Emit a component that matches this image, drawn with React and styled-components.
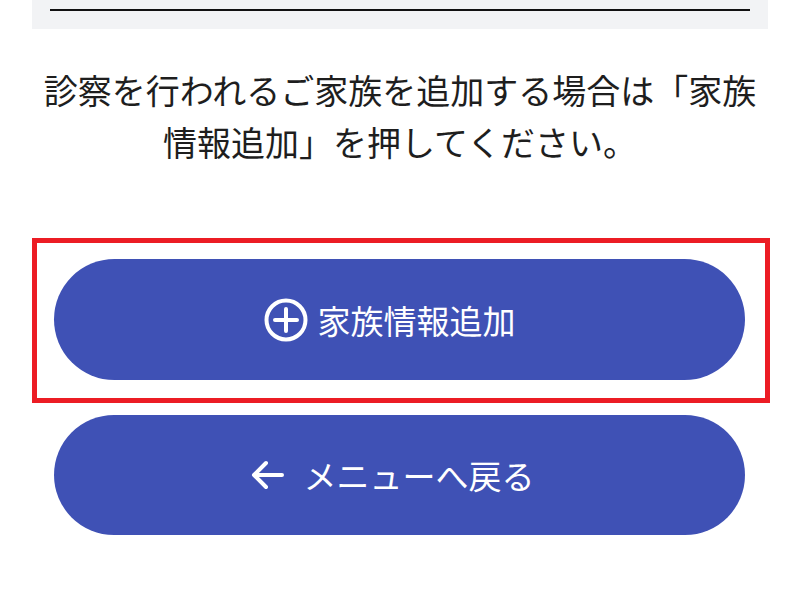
import React from "react";
import styled, { createGlobalStyle } from "styled-components";

const Global = createGlobalStyle`
  html, body { margin: 0; padding: 0; background: #ffffff; }
  body { font-family: "Noto Sans CJK JP", "Noto Sans", sans-serif; }
`;

const Page = styled.div`
  width: 800px;
  height: 589px;
  overflow: hidden;
  display: flex;
  flex-direction: column;
  align-items: flex-start;
`;

const TopPanel = styled.div`
  margin-left: 32px;
  width: 736px;
  height: 29px;
  background: #f2f3f5;
  box-sizing: border-box;
  padding: 9px 18px 0 18px;
`;

const Rule = styled.div`
  height: 2px;
  background: #111111;
`;

const Message = styled.p`
  margin: 35px 0 0 32px;
  width: 736px;
  text-align: center;
  font-size: 34px;
  line-height: 52px;
  color: #1e1e1e;
  font-weight: 400;
`;

const Highlight = styled.div`
  margin: 70px 0 0 32px;
  width: 738px;
  box-sizing: border-box;
  border: 5px solid #ec1c24;
  padding: 16px 20px 18px 17px;
`;

const PillButton = styled.button`
  display: flex;
  align-items: center;
  justify-content: center;
  gap: ${(p) => p.$gap}px;
  width: 691px;
  height: ${(p) => p.$h}px;
  border: none;
  border-radius: 61px;
  background: #3f51b5;
  color: #ffffff;
  font-family: "Noto Sans CJK JP", "Noto Sans", sans-serif;
  font-size: 33px;
  font-weight: 400;
  padding: 0 ${(p) => p.$offset}px 0 0;
  cursor: pointer;
`;

const BackButton = styled(PillButton)`
  margin: 12px 0 0 54px;
`;

const Icon = styled.svg`
  flex: none;
  display: block;
`;

const PlusCircle = () => (
  <Icon width="44" height="44" viewBox="0 0 44 44">
    <circle cx="22" cy="22" r="19.5" fill="none" stroke="#fff" strokeWidth="4" />
    <path d="M22 11 V33 M11 22 H33" stroke="#fff" strokeWidth="4" strokeLinecap="round" />
  </Icon>
);

const ArrowLeft = () => (
  <Icon width="35" height="30" viewBox="0 0 35 30">
    <path
      d="M32 15 H4 M16 3 L4 15 L16 27"
      fill="none"
      stroke="#fff"
      strokeWidth="4"
      strokeLinecap="round"
      strokeLinejoin="round"
    />
  </Icon>
);

export default function App() {
  return (
    <>
      <Global />
      <Page>
        <TopPanel>
          <Rule />
        </TopPanel>
        <Message>
          診察を行われるご家族を追加する場合は「家族情報追加」を押してください。
        </Message>
        <Highlight>
          <PillButton $h={121} $gap={10} $offset={20}>
            <PlusCircle />
            <span>家族情報追加</span>
          </PillButton>
        </Highlight>
        <BackButton $h={120} $gap={19} $offset={15}>
          <ArrowLeft />
          <span>メニューへ戻る</span>
        </BackButton>
      </Page>
    </>
  );
}
